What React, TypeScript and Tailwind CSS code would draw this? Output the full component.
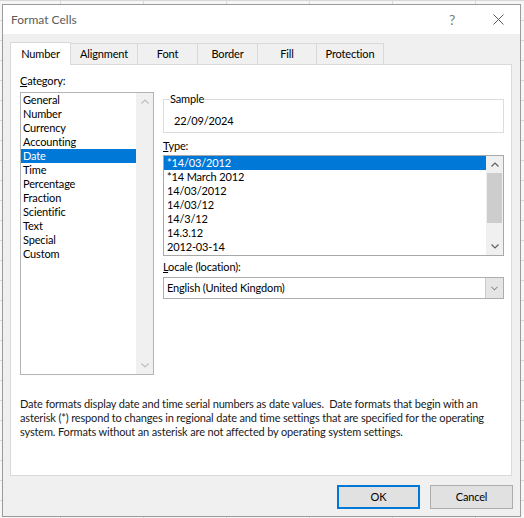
import React from "react";

function Chev({ up, color, w = 8 }: { up?: boolean; color: string; w?: number }) {
  return (
    <svg width={w} height="5" viewBox="0 0 8 5">
      <path
        d={up ? "M0.5 4.5 L4 1 L7.5 4.5" : "M0.5 0.5 L4 4 L7.5 0.5"}
        fill="none"
        stroke={color}
        strokeWidth="1.2"
      />
    </svg>
  );
}

const categories = [
  "General",
  "Number",
  "Currency",
  "Accounting",
  "Date",
  "Time",
  "Percentage",
  "Fraction",
  "Scientific",
  "Text",
  "Special",
  "Custom",
];

const types = [
  "*14/03/2012",
  "*14 March 2012",
  "14/03/2012",
  "14/03/12",
  "14/3/12",
  "14.3.12",
  "2012-03-14",
];

const tabs = [
  { label: "Number", w: "w-[61px]" },
  { label: "Alignment", w: "w-[67px]" },
  { label: "Font", w: "w-[60px]" },
  { label: "Border", w: "w-[60px]" },
  { label: "Fill", w: "w-[59px]" },
  { label: "Protection", w: "w-[67px]" },
];

export default function App() {
  return (
    <div className="w-[524px] h-[518px] overflow-hidden bg-[#f6f6f6] bg-[linear-gradient(#d8d8d8_1px,transparent_1px),linear-gradient(90deg,#d8d8d8_1px,transparent_1px)] bg-[length:83px_20px] bg-[position:60px_0px] pl-[2px] pt-[4px] font-['Lato',sans-serif] text-[11px] tracking-[-0.15px] text-black">
      <div className="w-[519px] h-[513px] border border-[#9b9b9b] bg-[#f0f0f0] flex flex-col">
        {/* Title bar */}
        <div className="h-[29px] shrink-0 bg-white flex items-center">
          <span className="pl-[8px] text-[12px] tracking-normal text-[#5c5c5c]">Format Cells</span>
          <span className="ml-auto w-[48px] text-center text-[14px] text-[#7a7a7a] leading-none">?</span>
          <span className="w-[44px] flex justify-center items-center">
            <svg width="11" height="11" viewBox="0 0 11 11">
              <path d="M0.5 0.5 L10.5 10.5 M10.5 0.5 L0.5 10.5" stroke="#5a5a5a" strokeWidth="1" fill="none" />
            </svg>
          </span>
        </div>

        {/* Body */}
        <div className="pl-[7px] pt-[8px] flex flex-col">
          {/* Tabs */}
          <div className="flex items-end h-[22px]">
            {tabs.map((t, i) =>
              i === 0 ? (
                <div
                  key={t.label}
                  className={`${t.w} h-[23px] -mb-px relative z-10 bg-white border-l border-t border-r border-[#d9d9d9] flex items-center justify-center`}
                >
                  {t.label}
                </div>
              ) : (
                <div
                  key={t.label}
                  className={`${t.w} h-[21px] bg-[#f0f0f0] border-t border-r border-[#d9d9d9] flex items-center justify-center`}
                >
                  {t.label}
                </div>
              )
            )}
          </div>

          {/* Panel */}
          <div className="w-[502px] h-[412px] border border-[#d9d9d9] bg-white flex flex-col">
            <div className="flex pl-[9px]">
              {/* Left column */}
              <div className="w-[134px] pt-[9px] flex flex-col">
                <div className="leading-[14px] mb-[4px]">
                  <span className="underline">C</span>ategory:
                </div>
                <div className="h-[283px] border border-[#b4b4b4] flex">
                  <div className="w-[115px] flex flex-col">
                    {categories.map((c) => (
                      <div
                        key={c}
                        className={
                          c === "Date"
                            ? "leading-[14px] pl-[2px] bg-[#0078d7] text-white"
                            : "leading-[14px] pl-[2px]"
                        }
                      >
                        {c}
                      </div>
                    ))}
                  </div>
                  <div className="w-[17px] bg-[#f0f0f0] flex flex-col justify-between">
                    <div className="h-[17px] flex items-center justify-center">
                      <Chev up color="#bfbfbf" />
                    </div>
                    <div className="h-[17px] flex items-center justify-center">
                      <Chev color="#bfbfbf" />
                    </div>
                  </div>
                </div>
              </div>

              {/* Right column */}
              <div className="ml-[9px] w-[341px] pt-[27px] flex flex-col">
                <fieldset className="border border-[#dcdcdc] pl-[6px] pb-[4px]">
                  <legend className="leading-[14px]">Sample</legend>
                  <div className="mt-[8px] pl-[4px] leading-[14px]">22/09/2024</div>
                </fieldset>

                <div className="mt-[6px] mb-[2px] leading-[14px]">
                  <span className="underline">T</span>ype:
                </div>
                <div className="h-[101px] border border-[#a8a8a8] flex">
                  <div className="flex-1 flex flex-col">
                    {types.map((t, i) => (
                      <div
                        key={t}
                        className={
                          i === 0
                            ? "leading-[14px] pl-[3px] bg-[#0078d7] text-white"
                            : "leading-[14px] pl-[3px]"
                        }
                      >
                        {t}
                      </div>
                    ))}
                  </div>
                  <div className="w-[17px] bg-[#f0f0f0] flex flex-col">
                    <div className="h-[17px] flex items-center justify-center">
                      <Chev up color="#606060" />
                    </div>
                    <div className="mx-[1px] h-[50px] bg-[#cdcdcd]" />
                    <div className="flex-1" />
                    <div className="h-[17px] flex items-center justify-center">
                      <Chev color="#606060" />
                    </div>
                  </div>
                </div>

                <div className="mt-[4px] mb-[3px] leading-[14px]">
                  <span className="underline">L</span>ocale (location):
                </div>
                <div className="h-[22px] border border-[#adadad] flex items-center">
                  <div className="flex-1 pl-[3px] leading-[14px]">English (United Kingdom)</div>
                  <div className="w-[18px] h-full bg-[#e5e5e5] border-l border-[#cccccc] flex items-center justify-center">
                    <Chev color="#8a8a8a" w={7} />
                  </div>
                </div>
              </div>
            </div>

            <div className="mt-[22px] pl-[9px] leading-[14px] text-[#1a1a1a] whitespace-pre">
              <div>Date formats display date and time serial numbers as date values.  Date formats that begin with an</div>
              <div>asterisk (*) respond to changes in regional date and time settings that are specified for the operating</div>
              <div>system. Formats without an asterisk are not affected by operating system settings.</div>
            </div>
          </div>

          {/* Buttons */}
          <div className="mt-[9px] pl-[327px] flex gap-[10px]">
            <button className="w-[83px] h-[24px] bg-[#e1e1e1] border-2 border-[#0078d7] flex items-center justify-center">
              OK
            </button>
            <button className="w-[83px] h-[24px] bg-[#e1e1e1] border border-[#adadad] flex items-center justify-center">
              Cancel
            </button>
          </div>
        </div>
      </div>
    </div>
  );
}
